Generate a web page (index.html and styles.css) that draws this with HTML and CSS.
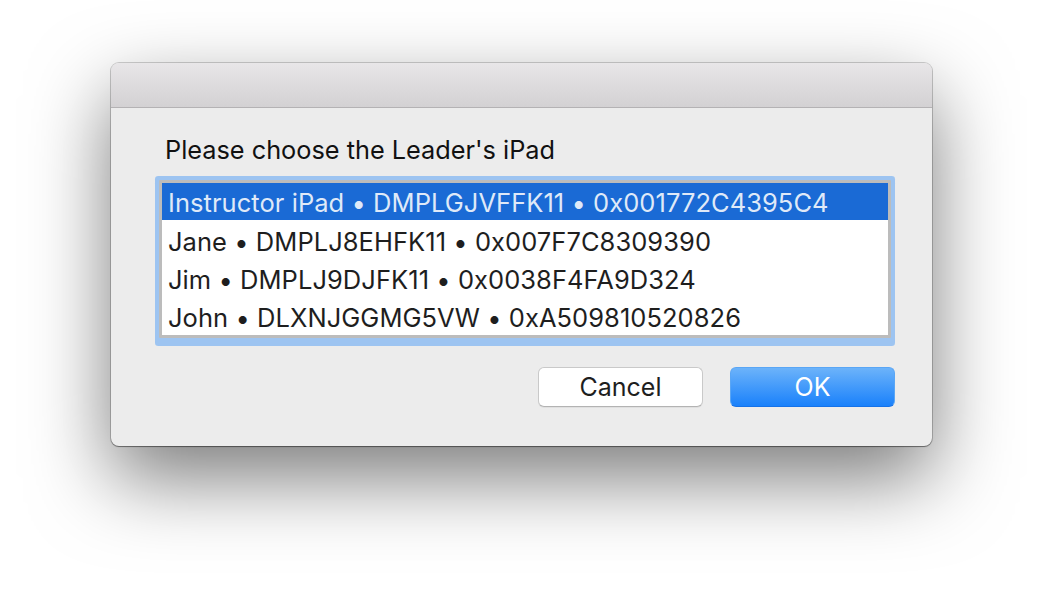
FILE: index.html
```html
<!DOCTYPE html>
<html>
<head>
<meta charset="utf-8">
<link rel="stylesheet" href="styles.css">
</head>
<body>
<div class="window">
  <div class="titlebar"></div>
  <div class="content">
    <div class="label">Please choose the Leader's iPad</div>
    <div class="list">
      <div class="row selected">Instructor iPad • DMPLGJVFFK11 • 0x001772C4395C4</div>
      <div class="row">Jane • DMPLJ8EHFK11 • 0x007F7C8309390</div>
      <div class="row">Jim • DMPLJ9DJFK11 • 0x0038F4FA9D324</div>
      <div class="row">John • DLXNJGGMG5VW • 0xA509810520826</div>
    </div>
    <div class="buttons">
      <button class="btn cancel">Cancel</button>
      <button class="btn ok">OK</button>
    </div>
  </div>
</div>
</body>
</html>
```
FILE: styles.css
```css
html, body {
  margin: 0;
  padding: 0;
}
body {
  background: #ffffff;
  width: 1044px;
  height: 606px;
  overflow: hidden;
  padding: 63px 0 0 111px;
  box-sizing: border-box;
  font-family: Inter, "Noto Sans", sans-serif;
}
.window {
  width: 821px;
  height: 383px;
  box-sizing: border-box;
  background: #ececec;
  border-radius: 8px;
  box-shadow: 0 0 0 1px rgba(0, 0, 0, 0.18), 0 1px 1px rgba(0,0,0,0.35), 0 32px 80px rgba(0, 0, 0, 0.52);
  overflow: hidden;
  display: flex;
  flex-direction: column;
}
.titlebar {
  height: 44px;
  flex: none;
  background: linear-gradient(#e8e6e8, #d3d1d3);
  border-bottom: 1px solid #b4b2b4;
}
.content {
  display: flex;
  flex-direction: column;
  padding: 28px 0 0 0;
}
.label {
  font-size: 25.3px;
  line-height: 28px;
  color: #111;
  padding-left: 54px;
}
.list {
  margin: 16px 0 0 48px;
  width: 726px;
  border: 3px solid #bcbcbc;
  background: #fff;
  box-shadow: 0 0 0 4px #9dc4f1, 0 4px 0 4px #9dc4f1;
  border-radius: 1px;
  display: flex;
  flex-direction: column;
}
.row {
  height: 38px;
  line-height: 34px;
  padding: 4px 0 0 6px;
  box-sizing: border-box;
  font-size: 25.5px;
  letter-spacing: 0.05px;
  color: #1e1e1e;
  white-space: nowrap;
}
.row.selected {
  background: #1a6ad5;
  color: #dfe9f8;
  height: 37px;
  padding-top: 3px;
}
.row.selected + .row {
  height: 39px;
  padding-top: 5px;
}
.buttons {
  display: flex;
  justify-content: flex-end;
  gap: 27px;
  padding: 0 37px 0 0;
  margin-top: 29px;
}
.btn {
  width: 165px;
  height: 40px;
  border-radius: 6px;
  font-family: Inter, "Noto Sans", sans-serif;
  font-size: 25px;
  padding: 0;
}
.cancel {
  background: #fff;
  color: #1e1e1e;
  border: 1px solid #c9c9c9;
  border-bottom-color: #b3b3b3;
  box-shadow: 0 1px 0 rgba(0,0,0,0.05);
}
.ok {
  background: linear-gradient(#6cb3fa, #1a81fb);
  color: #fff;
  border: 1px solid #5aa6f5;
  border-bottom-color: #1672e8;
}
```
